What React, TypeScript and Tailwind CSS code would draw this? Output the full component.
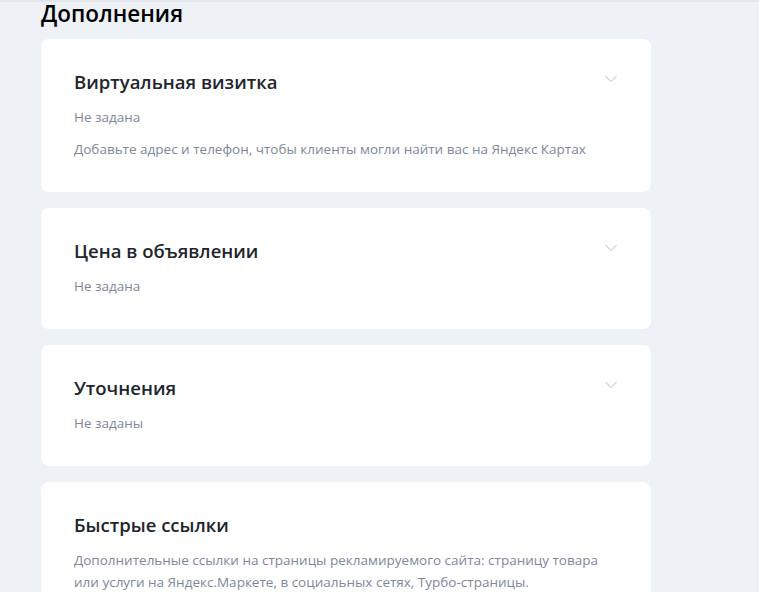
const font = { fontFamily: '"Open Sans", "Noto Sans", sans-serif' };

type Item = { title: string; status?: string; text?: string; chevron?: boolean };

const ITEMS: Item[] = [
  {
    title: 'Виртуальная визитка',
    status: 'Не задана',
    text: 'Добавьте адрес и телефон, чтобы клиенты могли найти вас на Яндекс Картах',
    chevron: true,
  },
  { title: 'Цена в объявлении', status: 'Не задана', chevron: true },
  { title: 'Уточнения', status: 'Не заданы', chevron: true },
  {
    title: 'Быстрые ссылки',
    text: 'Дополнительные ссылки на страницы рекламируемого сайта: страницу товара или услуги на Яндекс.Маркете, в социальных сетях, Турбо-страницы.',
  },
];

function Chevron() {
  return (
    <svg width="14" height="8" viewBox="0 0 14 8" fill="none" className="shrink-0">
      <path d="M1.5 1l5.5 5.5 5.5-5.5" stroke="#d4d6da" strokeWidth="1.2" />
    </svg>
  );
}

function Card({ item }: { item: Item }) {
  return (
    <div className="rounded-lg bg-white px-[33px] pb-8 pt-8">
      <div className="flex items-start justify-between">
        <h3 className="text-[18.5px] font-semibold leading-[22px] text-[#21252d]">{item.title}</h3>
        {item.chevron && (
          <div className="mt-[4px]">
            <Chevron />
          </div>
        )}
      </div>
      {item.status && (
        <div className="mt-[13px] text-[13.5px] leading-[22px] text-[#80879a]">{item.status}</div>
      )}
      {item.text && (
        <p className={`${item.status ? 'mt-[10px]' : 'mt-[13px]'} max-w-[540px] text-[13.5px] leading-[22px] text-[#80879a]`}>
          {item.text}
        </p>
      )}
    </div>
  );
}

export default function App() {
  return (
    <div className="h-[592px] overflow-hidden border-t-[2px] border-[#e3e5e9] bg-[#eef1f6]" style={font}>
      <div className="w-[651px] pl-[41px]">
        <h2 className="text-[22.5px] font-semibold leading-6 text-black">Дополнения</h2>
        <div className="mt-[13px] flex flex-col gap-4">
          {ITEMS.map((it) => (
            <Card key={it.title} item={it} />
          ))}
        </div>
      </div>
    </div>
  );
}
